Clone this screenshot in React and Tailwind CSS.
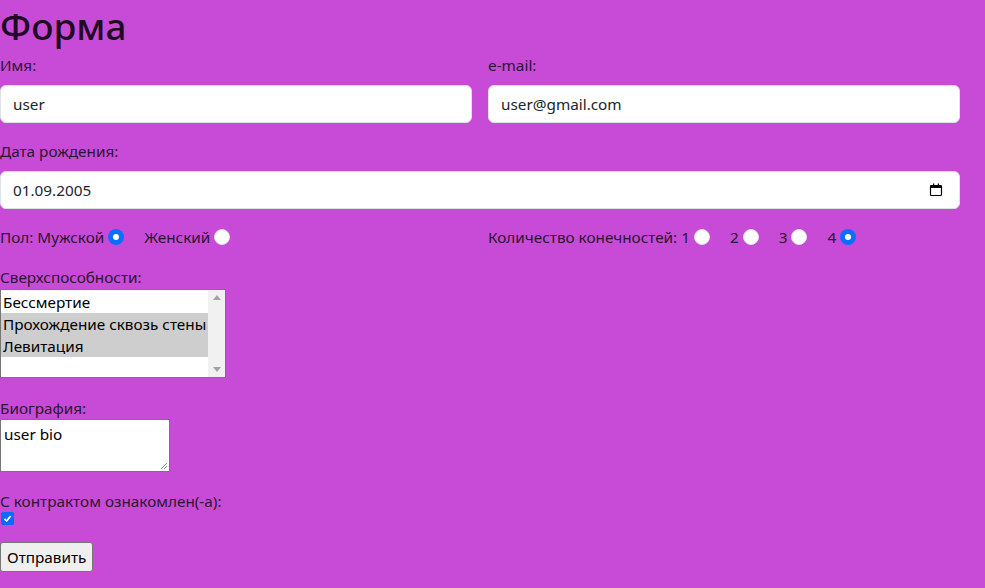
const font = { fontFamily: '"Noto Sans", "Open Sans", sans-serif' };

function Radio({ checked }) {
  return checked ? (
    <span className="inline-flex items-center justify-center w-4 h-4 rounded-full bg-[#0d6efd] ml-1">
      <span className="w-[6px] h-[6px] rounded-full bg-white" />
    </span>
  ) : (
    <span className="inline-block w-4 h-4 rounded-full bg-white border border-[#dee2e6] ml-1" />
  );
}

function Field({ label, value, right }) {
  return (
    <div>
      <div className="leading-6 mb-[8px]">{label}</div>
      <div className="h-[38px] bg-white border border-[#dee2e6] rounded-[6px] px-3 flex items-center justify-between text-[#212529]">
        <span>{value}</span>
        {right}
      </div>
    </div>
  );
}

export default function App() {
  return (
    <div className="min-h-[588px] bg-[#c84bd8] text-[#2b1530] text-[15.3px]" style={font}>
      <div className="w-[960px]">
        <h1 className="text-[37px] font-medium leading-[44px] pt-[4px] text-[#1f0a23] mb-[5px]">Форма</h1>

        <div className="grid grid-cols-2 gap-x-4">
          <Field label="Имя:" value="user" />
          <Field label="e-mail:" value="user@gmail.com" />
        </div>

        <div className="mt-4">
          <Field
            label="Дата рождения:"
            value="01.09.2005"
            right={
              <svg width="14" height="14" viewBox="0 0 14 14" className="mr-[4px]">
                <rect x="1.5" y="2.5" width="11" height="10" rx="1" fill="none" stroke="#000" strokeWidth="1.2" />
                <rect x="1.5" y="2" width="11" height="3" fill="#000" />
                <rect x="4" y="0.5" width="1.2" height="3" fill="#000" />
                <rect x="8.8" y="0.5" width="1.2" height="3" fill="#000" />
              </svg>
            }
          />
        </div>

        <div className="grid grid-cols-2 gap-x-4 mt-4">
          <div className="flex items-center h-6">
            <span>Пол: Мужской</span><Radio checked />
            <span className="ml-5">Женский</span><Radio />
          </div>
          <div className="flex items-center h-6">
            <span>Количество конечностей: 1</span><Radio />
            <span className="ml-5">2</span><Radio />
            <span className="ml-5">3</span><Radio />
            <span className="ml-5">4</span><Radio checked />
          </div>
        </div>

        <div className="mt-4 leading-6">Сверхспособности:</div>
        <div className="w-[226px] h-[89px] bg-white border border-[#767676] flex text-black">
          <div className="flex-1 pt-[1px]">
            <div className="h-[22px] leading-[22px] px-[2px]">Бессмертие</div>
            <div className="h-[22px] leading-[22px] px-[2px] bg-[#cecece] whitespace-nowrap">Прохождение сквозь стены</div>
            <div className="h-[22px] leading-[22px] px-[2px] bg-[#cecece]">Левитация</div>
          </div>
          <div className="w-[17px] bg-[#f1f1f1] flex flex-col justify-between items-center py-[5px]">
            <svg width="8" height="5" viewBox="0 0 8 5"><path d="M0 5 L4 0 L8 5 Z" fill="#a3a3a3" /></svg>
            <svg width="8" height="5" viewBox="0 0 8 5"><path d="M0 0 L4 5 L8 0 Z" fill="#a3a3a3" /></svg>
          </div>
        </div>

        <div className="mt-[18px] leading-6 -mb-[1px]">Биография:</div>
        <div className="relative w-[170px] h-[53px] bg-white border border-[#767676] text-black px-[3px] pt-[3px] leading-[22px]">
          user bio
          <svg width="8" height="8" viewBox="0 0 8 8" className="absolute right-[1px] bottom-[1px]">
            <path d="M7 1 L1 7 M7 4 L4 7" stroke="#888" strokeWidth="1" />
          </svg>
        </div>

        <div className="mt-[17px] leading-6 -mb-[1px]">С контрактом ознакомлен(-а):</div>
        <div className="ml-[1px] w-[13px] h-[13px] rounded-[2px] bg-[#0b6bfa] flex items-center justify-center">
          <svg width="9" height="9" viewBox="0 0 9 9"><path d="M1.5 4.8 L3.6 7 L7.7 2" stroke="#fff" strokeWidth="1.8" fill="none" /></svg>
        </div>

        <button className="mt-[17px] h-[30px] px-[6px] bg-[#efefef] border border-[#767676] rounded-[3px] text-black">
          Отправить
        </button>
      </div>
    </div>
  );
}
